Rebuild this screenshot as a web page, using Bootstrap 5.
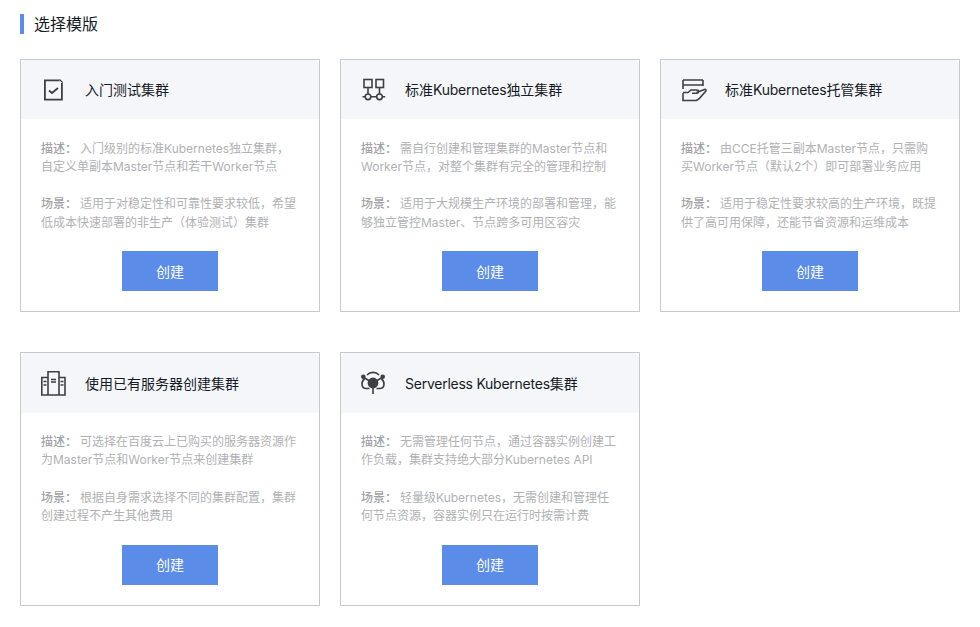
<!DOCTYPE html>
<html lang="zh-CN">
<head>
<meta charset="utf-8">
<title>选择模版</title>
<link href="https://cdn.jsdelivr.net/npm/bootstrap@5.3.0/dist/css/bootstrap.min.css" rel="stylesheet">
<style>
body{background:#fff;font-family:Inter,"Noto Sans CJK SC",sans-serif;color:#151b26;overflow:hidden}
.page-wrap{padding:14px 20px 0}
.sec-title{border-left:4px solid #5b8de8;padding-left:10px;font-size:16px;line-height:20px;height:20px;margin-bottom:25px;color:#151b26}
.tpl-grid{display:grid;grid-template-columns:repeat(3,300px);gap:40px 20px}
.tpl-card{border:1px solid #c8c9cb;border-radius:0;height:253.4px}
.tpl-head{height:59.4px;background:#f5f6fa;padding:0 20px;gap:20px;font-size:14px;font-weight:400;color:#151b26;border:0;border-radius:0}
.tpl-head svg{width:24px;height:24px;flex:none;overflow:visible}
.lat{letter-spacing:-.25px}
.tpl-body{padding:20.3px 20px 0;font-size:12px;line-height:18.4px;color:#b0b1b4;white-space:nowrap}
.tpl-body p{margin:0 0 18.8px;height:36.8px}
.tpl-body b{font-weight:500;color:#a2a3a6;margin-right:3px}
.tpl-btn{width:96px;height:40px;background:#5b8de8;border:0;border-radius:0;color:#fff;font-size:14px;padding:0;display:block;margin:19.1px auto 0}
.tpl-btn:hover{background:#5b8de8;color:#fff}
</style>
</head>
<body>
<div class="page-wrap">
  <div class="sec-title">选择模版</div>
  <div class="tpl-grid">

    <div class="card tpl-card">
      <div class="card-header tpl-head d-flex align-items-center">
        <svg viewBox="0 0 24 24" fill="none" stroke="#3c3f45" stroke-width="1.8"><path d="M18.500 2.400H3.900v19.200h17V5"/><path d="M18.500 1.500l3.200 3.200" stroke-width="1.200"/><path d="M8 12.500l3 2.500 6-5"/></svg>
        <span>入门测试集群</span>
      </div>
      <div class="card-body tpl-body">
        <p><b>描述：</b>入门级别的标准Kubernetes独立集群，<br>自定义单副本Master节点和若干Worker节点</p>
        <p><b>场景：</b>适用于对稳定性和可靠性要求较低，希望<br>低成本快速部署的非生产（体验测试）集群</p>
        <button class="btn tpl-btn" type="button">创建</button>
      </div>
    </div>

    <div class="card tpl-card">
      <div class="card-header tpl-head d-flex align-items-center">
        <svg viewBox="0 0 24 24" fill="none" stroke="#3c3f45" stroke-width="1.6"><rect x="3" y="1.500" width="8" height="8"/><rect x="15" y="1.500" width="7.500" height="8"/><path d="M7 9.500v6.500M18.500 9.500v6.500M1.500 18.800h2.800M10 18.800h5.800M21.200 18.800h3"/><circle cx="7" cy="18.800" r="2.800"/><circle cx="18.500" cy="18.800" r="2.800"/></svg>
        <span>标准<span class="lat">Kubernetes</span>独立集群</span>
      </div>
      <div class="card-body tpl-body">
        <p><b>描述：</b>需自行创建和管理集群的Master节点和<br>Worker节点，对整个集群有完全的管理和控制</p>
        <p><b>场景：</b>适用于大规模生产环境的部署和管理，能<br>够独立管控Master、节点跨多可用区容灾</p>
        <button class="btn tpl-btn" type="button">创建</button>
      </div>
    </div>

    <div class="card tpl-card">
      <div class="card-header tpl-head d-flex align-items-center">
        <svg viewBox="0 0 24 24" fill="none" stroke="#3c3f45" stroke-width="1.600"><path d="M2 2h20M2 7h20M2 2v9M22 2v6"/><path d="M2 14.500h5l3-2.500h6c2 0 2 3.200 0 3.200h-5"/><path d="M15.500 14.500l8-3c1.500-.4 2 .8 1.200 1.800l-6.200 7-3 2.200H2v-7.500"/></svg>
        <span>标准<span class="lat">Kubernetes</span>托管集群</span>
      </div>
      <div class="card-body tpl-body">
        <p><b>描述：</b>由CCE托管三副本Master节点，只需购<br>买Worker节点（默认2个）即可部署业务应用</p>
        <p><b>场景：</b>适用于稳定性要求较高的生产环境，既提<br>供了高可用保障，还能节省资源和运维成本</p>
        <button class="btn tpl-btn" type="button">创建</button>
      </div>
    </div>

    <div class="card tpl-card">
      <div class="card-header tpl-head d-flex align-items-center">
        <svg viewBox="0 0 24 24" fill="none" stroke="#3c3f45" stroke-width="1.600"><path d="M.8 24V6.500h6.200M24 24V6.500h-6M7 24V.8h11V24M0 24h24.800"/><path d="M2.500 10.500h3M2.500 14h3M19.500 10.500h3M19.500 14h3M10 8.500h5M10 11h5"/></svg>
        <span>使用已有服务器创建集群</span>
      </div>
      <div class="card-body tpl-body">
        <p><b>描述：</b>可选择在百度云上已购买的服务器资源作<br>为Master节点和Worker节点来创建集群</p>
        <p><b>场景：</b>根据自身需求选择不同的集群配置，集群<br>创建过程不产生其他费用</p>
        <button class="btn tpl-btn" type="button">创建</button>
      </div>
    </div>

    <div class="card tpl-card">
      <div class="card-header tpl-head d-flex align-items-center">
        <svg viewBox="0 0 24 24" fill="none" stroke="#3c3f45" stroke-width="1.600"><path d="M6 4C9 .5 15 .5 18 4"/><path d="M3.500 8C-.5 11 .5 17.500 5 17.500h3.500M20.500 8c4 3 3 9.500-1.500 9.500h-3.500"/><path d="M2 6l10 6 10-6M12 12v11"/><circle cx="2.300" cy="5.800" r="1.500" fill="#3c3f45"/><circle cx="21.700" cy="5.800" r="1.500" fill="#3c3f45"/><circle cx="12" cy="12" r="4.600" fill="#3c3f45"/></svg>
        <span><span class="lat">Serverless Kubernetes</span>集群</span>
      </div>
      <div class="card-body tpl-body">
        <p><b>描述：</b>无需管理任何节点，通过容器实例创建工<br>作负载，集群支持绝大部分Kubernetes API</p>
        <p><b>场景：</b>轻量级Kubernetes，无需创建和管理任<br>何节点资源，容器实例只在运行时按需计费</p>
        <button class="btn tpl-btn" type="button">创建</button>
      </div>
    </div>

  </div>
</div>
<script src="https://cdn.jsdelivr.net/npm/bootstrap@5.3.0/dist/js/bootstrap.bundle.min.js"></script>
</body>
</html>
